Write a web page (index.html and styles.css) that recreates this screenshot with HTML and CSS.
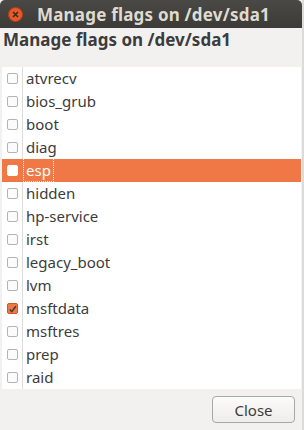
FILE: index.html
```html
<!DOCTYPE html>
<html lang="en">
  <head>
    <meta charset="UTF-8" />
    <title>Manage flags on /dev/sda1</title>
    <link rel="stylesheet" href="styles.css">
  </head>
  <body>
    <div class="window">
      <div class="titlebar">
        <span class="close-dot">
          <svg width="15" height="15" viewBox="0 0 15 15">
            <circle cx="7.5" cy="7.5" r="7" fill="#e8592a" stroke="#a8401c" stroke-width="1" />
            <path d="M5 5 L10 10 M10 5 L5 10" stroke="#3a2a22" stroke-width="1.6" />
          </svg>
        </span>
        <span class="title-text">Manage flags on /dev/sda1</span>
      </div>
      <h1 class="heading">Manage flags on /dev/sda1</h1>
      <div class="flag-list">
        <div class="flag-row"><span class="check"><span class="box"></span></span><span class="name">atvrecv</span></div>
        <div class="flag-row"><span class="check"><span class="box"></span></span><span class="name">bios_grub</span></div>
        <div class="flag-row"><span class="check"><span class="box"></span></span><span class="name">boot</span></div>
        <div class="flag-row"><span class="check"><span class="box"></span></span><span class="name">diag</span></div>
        <div class="flag-row selected"><span class="check"><span class="box"></span></span><span class="name"><span class="focus">esp</span></span></div>
        <div class="flag-row"><span class="check"><span class="box"></span></span><span class="name">hidden</span></div>
        <div class="flag-row"><span class="check"><span class="box"></span></span><span class="name">hp-service</span></div>
        <div class="flag-row"><span class="check"><span class="box"></span></span><span class="name">irst</span></div>
        <div class="flag-row"><span class="check"><span class="box"></span></span><span class="name">legacy_boot</span></div>
        <div class="flag-row"><span class="check"><span class="box"></span></span><span class="name">lvm</span></div>
        <div class="flag-row"><span class="check"><span class="box checked">
          <svg width="11" height="11" viewBox="0 0 11 11">
            <path d="M2.2 5.6 L4.6 8.2 L9.6 1.6" fill="none" stroke="#3a3a3a" stroke-width="1.8" />
          </svg>
        </span></span><span class="name">msftdata</span></div>
        <div class="flag-row"><span class="check"><span class="box"></span></span><span class="name">msftres</span></div>
        <div class="flag-row"><span class="check"><span class="box"></span></span><span class="name">prep</span></div>
        <div class="flag-row"><span class="check"><span class="box"></span></span><span class="name">raid</span></div>
      </div>
      <div class="footer">
        <button class="close-btn">Close</button>
      </div>
    </div>
  </body>
</html>
```

FILE: styles.css
```css
* {
  margin: 0;
  padding: 0;
  box-sizing: border-box;
}
body {
  background-color: #f2f1f0;
  font-family: "Noto Sans", "Open Sans", sans-serif;
  color: #3c3c3c;
}
.window {
  width: 304px;
  height: 430px;
  display: flex;
  flex-direction: column;
  border-right: 2px solid #dcdbd9;
}
.titlebar {
  height: 28px;
  display: flex;
  align-items: center;
  gap: 14px;
  padding-left: 8px;
  background: linear-gradient(#4a4945, #3c3b37);
  border-radius: 5px 5px 0 0;
}
.close-dot {
  display: flex;
}
.title-text {
  color: #dfdbd2;
  font-size: 17px;
  font-weight: bold;
  letter-spacing: 0.2px;
}
.heading {
  font-size: 17px;
  font-weight: bold;
  color: #3c3c3c;
  padding: 0 0 0 3px;
  height: 39px;
}
.flag-list {
  margin: 0 1px 0 2px;
  background-color: #ffffff;
  height: 322px;
}
.flag-row {
  display: flex;
  height: 23px;
  font-size: 15px;
}
.check {
  width: 21px;
  border-right: 1px solid #dcdcdc;
  display: flex;
  align-items: center;
  padding-left: 5px;
}
.box {
  width: 11px;
  height: 11px;
  border: 1px solid #b4b4b0;
  border-radius: 2px;
  background-color: #fbfbfb;
  display: flex;
}
.box.checked {
  background-color: #f07746;
  border-color: #c65a2e;
}
.name {
  display: flex;
  align-items: center;
  padding: 0 0 2px 3px;
}
.selected {
  background-color: #f07746;
  color: #ffffff;
}
.selected .check {
  border-right-color: #f07746;
}
.selected .box {
  background-color: #ffffff;
  border-color: #ffffff;
}
.focus {
  outline: 1px dotted #ffffff;
  padding: 1px 2px;
  margin-left: -2px;
}
.footer {
  flex: 1;
  display: flex;
  justify-content: flex-end;
  align-items: center;
  padding-right: 7px;
}
.close-btn {
  width: 83px;
  height: 27px;
  font-family: "Noto Sans", "Open Sans", sans-serif;
  font-size: 15px;
  color: #3c3c3c;
  border: 1px solid #a8a8a6;
  border-radius: 4px;
  background: linear-gradient(#fbfbfa, #eeedec);
}
```
